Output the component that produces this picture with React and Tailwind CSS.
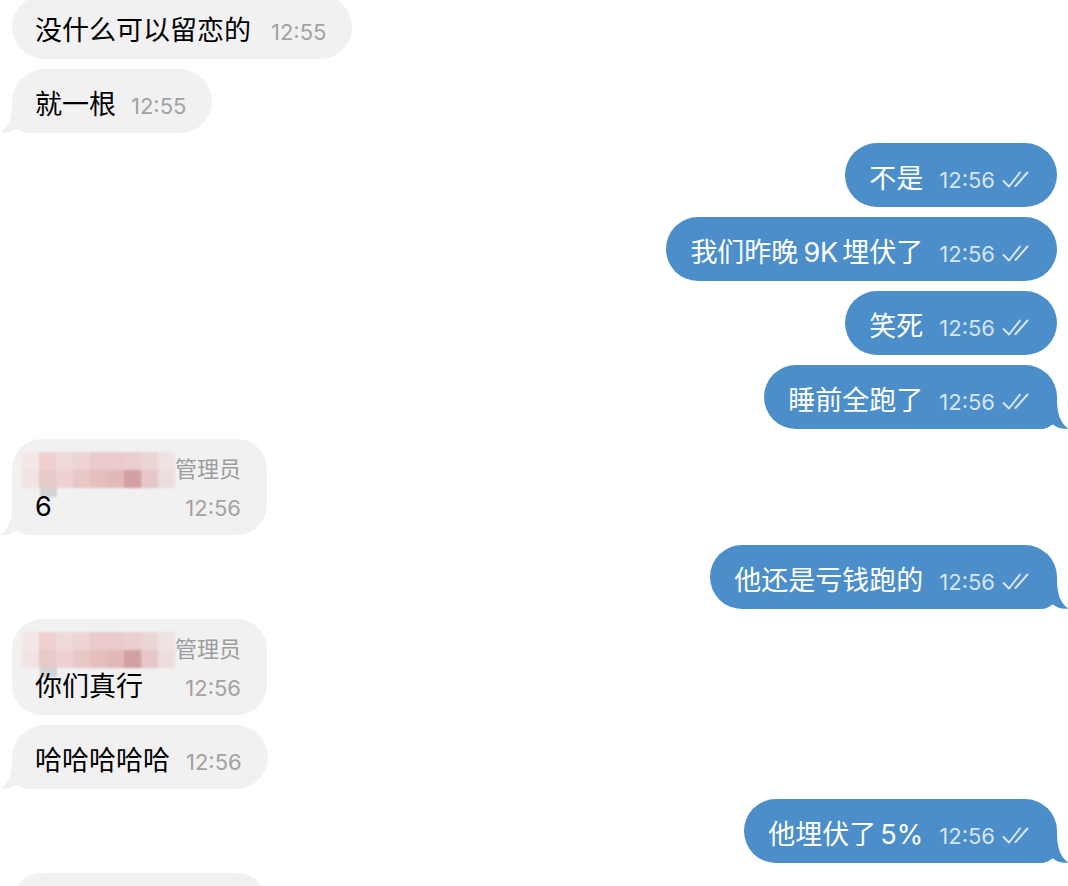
import React from "react";

const FONT = { fontFamily: 'Inter, "Noto Sans CJK SC", "Noto Sans", sans-serif' };

function Tail({ side, color }) {
  const cls =
    side === "right"
      ? "absolute bottom-0 right-[-12px]"
      : "absolute bottom-0 left-[-12px] -scale-x-100";
  return (
    <svg className={cls} width="24" height="30" viewBox="0 0 24 30">
      <path
        d="M0 0 H12 C12 14 15 24 23.5 29.5 C18 30.5 12 29 8 25.5 L0 25.5 Z"
        fill={color}
      />
    </svg>
  );
}

function Checks() {
  return (
    <svg className="ml-[7px] translate-y-[4px]" width="28" height="19" viewBox="0 0 28 19">
      <path
        d="M1.5 11 L7 16.5 L18 2.5"
        fill="none"
        stroke="#dbe8f5"
        strokeWidth="1.9"
        strokeLinecap="round"
        strokeLinejoin="round"
      />
      <path
        d="M13.5 16 L25.5 2.5"
        fill="none"
        stroke="#dbe8f5"
        strokeWidth="1.9"
        strokeLinecap="round"
      />
    </svg>
  );
}

function Out({ children, tail }) {
  return (
    <div className="flex justify-end pr-[11px]">
      <div
        className={
          "relative flex h-16 items-center bg-[#4b8eca] pl-[24px] pr-[27px] " +
          (tail ? "rounded-l-[32px] rounded-tr-[32px] rounded-br-[16px]" : "rounded-[32px]")
        }
      >
        <span className="translate-y-[3px] whitespace-nowrap text-[27px] leading-none text-white">{children}</span>
        <span className="ml-[16px] translate-y-[5px] text-[22px] leading-none text-[#d6e5f3]">12:56</span>
        <Checks />
        {tail && <Tail side="right" color="#4b8eca" />}
      </div>
    </div>
  );
}

function In({ text, time = "12:56", tail, gap = "ml-[16px]" }) {
  return (
    <div className="flex justify-start pl-[12px]">
      <div
        className={
          "relative flex h-16 items-center bg-[#f1f1f1] pl-[23px] pr-[26px] " +
          (tail ? "rounded-r-[32px] rounded-tl-[32px] rounded-bl-[16px]" : "rounded-[32px]")
        }
      >
        <span className="translate-y-[3px] text-[27px] leading-none text-black">{text}</span>
        <span className={gap + " translate-y-[5px] text-[22px] leading-none text-[#a2a2a2]"}>{time}</span>
        {tail && <Tail side="left" color="#f1f1f1" />}
      </div>
    </div>
  );
}

const MOSAIC = [
  ["#f3e7e7", "#eed0d0", "#f0d9d9", "#eed4d4", "#eacaca", "#e9cbcb", "#ebcfcf", "#ebd5d5", "#efe2e2"],
  ["#f1e4e4", "#e6c9c9", "#eed1d1", "#e8c7c7", "#e5bfbf", "#e2b9b9", "#d3a0a1", "#e7c6c6", "#eddede"],
];

function Mosaic() {
  return (
    <div className="relative -ml-[13px] h-[36px] w-[153px] blur-[1.2px]">
      <div className="grid h-full w-full grid-cols-9 grid-rows-2">
        {MOSAIC.flat().map((c, i) => (
          <div key={i} style={{ backgroundColor: c }} />
        ))}
      </div>
      <div className="absolute left-[18px] top-[36px] h-[9px] w-[17px] bg-[#d1d4d1]" />
    </div>
  );
}

function Admin({ text, tail, cut }) {
  return (
    <div className="flex justify-start pl-[12px]">
      <div
        className={
          "relative bg-[#f1f1f1] pb-[12px] pl-[23px] pr-[26px] pt-[13px] " +
          (tail ? "rounded-r-[30px] rounded-tl-[30px] rounded-bl-[16px]" : "rounded-[30px]")
        }
      >
        <div className={"flex h-[35px] items-center " + (cut ? "invisible" : "")}>
          <Mosaic />
          <span className="-translate-y-[1px] text-[22px] leading-none text-[#9c9c9c]">管理员</span>
        </div>
        <div className={"flex h-[36px] items-center justify-between gap-4 " + (cut ? "invisible" : "")}>
          <span className="translate-y-[1px] text-[27px] leading-none text-black">{text}</span>
          <span className="translate-y-[3px] text-[22px] leading-none text-[#a2a2a2]">12:56</span>
        </div>
        {tail && <Tail side="left" color="#f1f1f1" />}
      </div>
    </div>
  );
}

export default function App() {
  return (
    <div className="h-[886px] w-[1068px] overflow-hidden bg-white" style={FONT}>
      <div className="-mt-[5px] flex flex-col gap-[10px]">
        <In text="没什么可以留恋的" time="12:55" gap="ml-[20px]" />
        <In text="就一根" time="12:55" tail gap="ml-[15px]" />
        <Out>不是</Out>
        <Out>
          我们昨晚<span className="ml-[5px]">9K</span>
          <span className="ml-[4px]">埋伏了</span>
        </Out>
        <Out>笑死</Out>
        <Out tail>睡前全跑了</Out>
        <Admin text="6" tail />
        <Out tail>他还是亏钱跑的</Out>
        <Admin text="你们真行" />
        <In text="哈哈哈哈哈" tail />
        <Out tail>
          他埋伏了<span className="ml-[4px]">5%</span>
        </Out>
        <Admin text="你们真行" cut />
      </div>
    </div>
  );
}
